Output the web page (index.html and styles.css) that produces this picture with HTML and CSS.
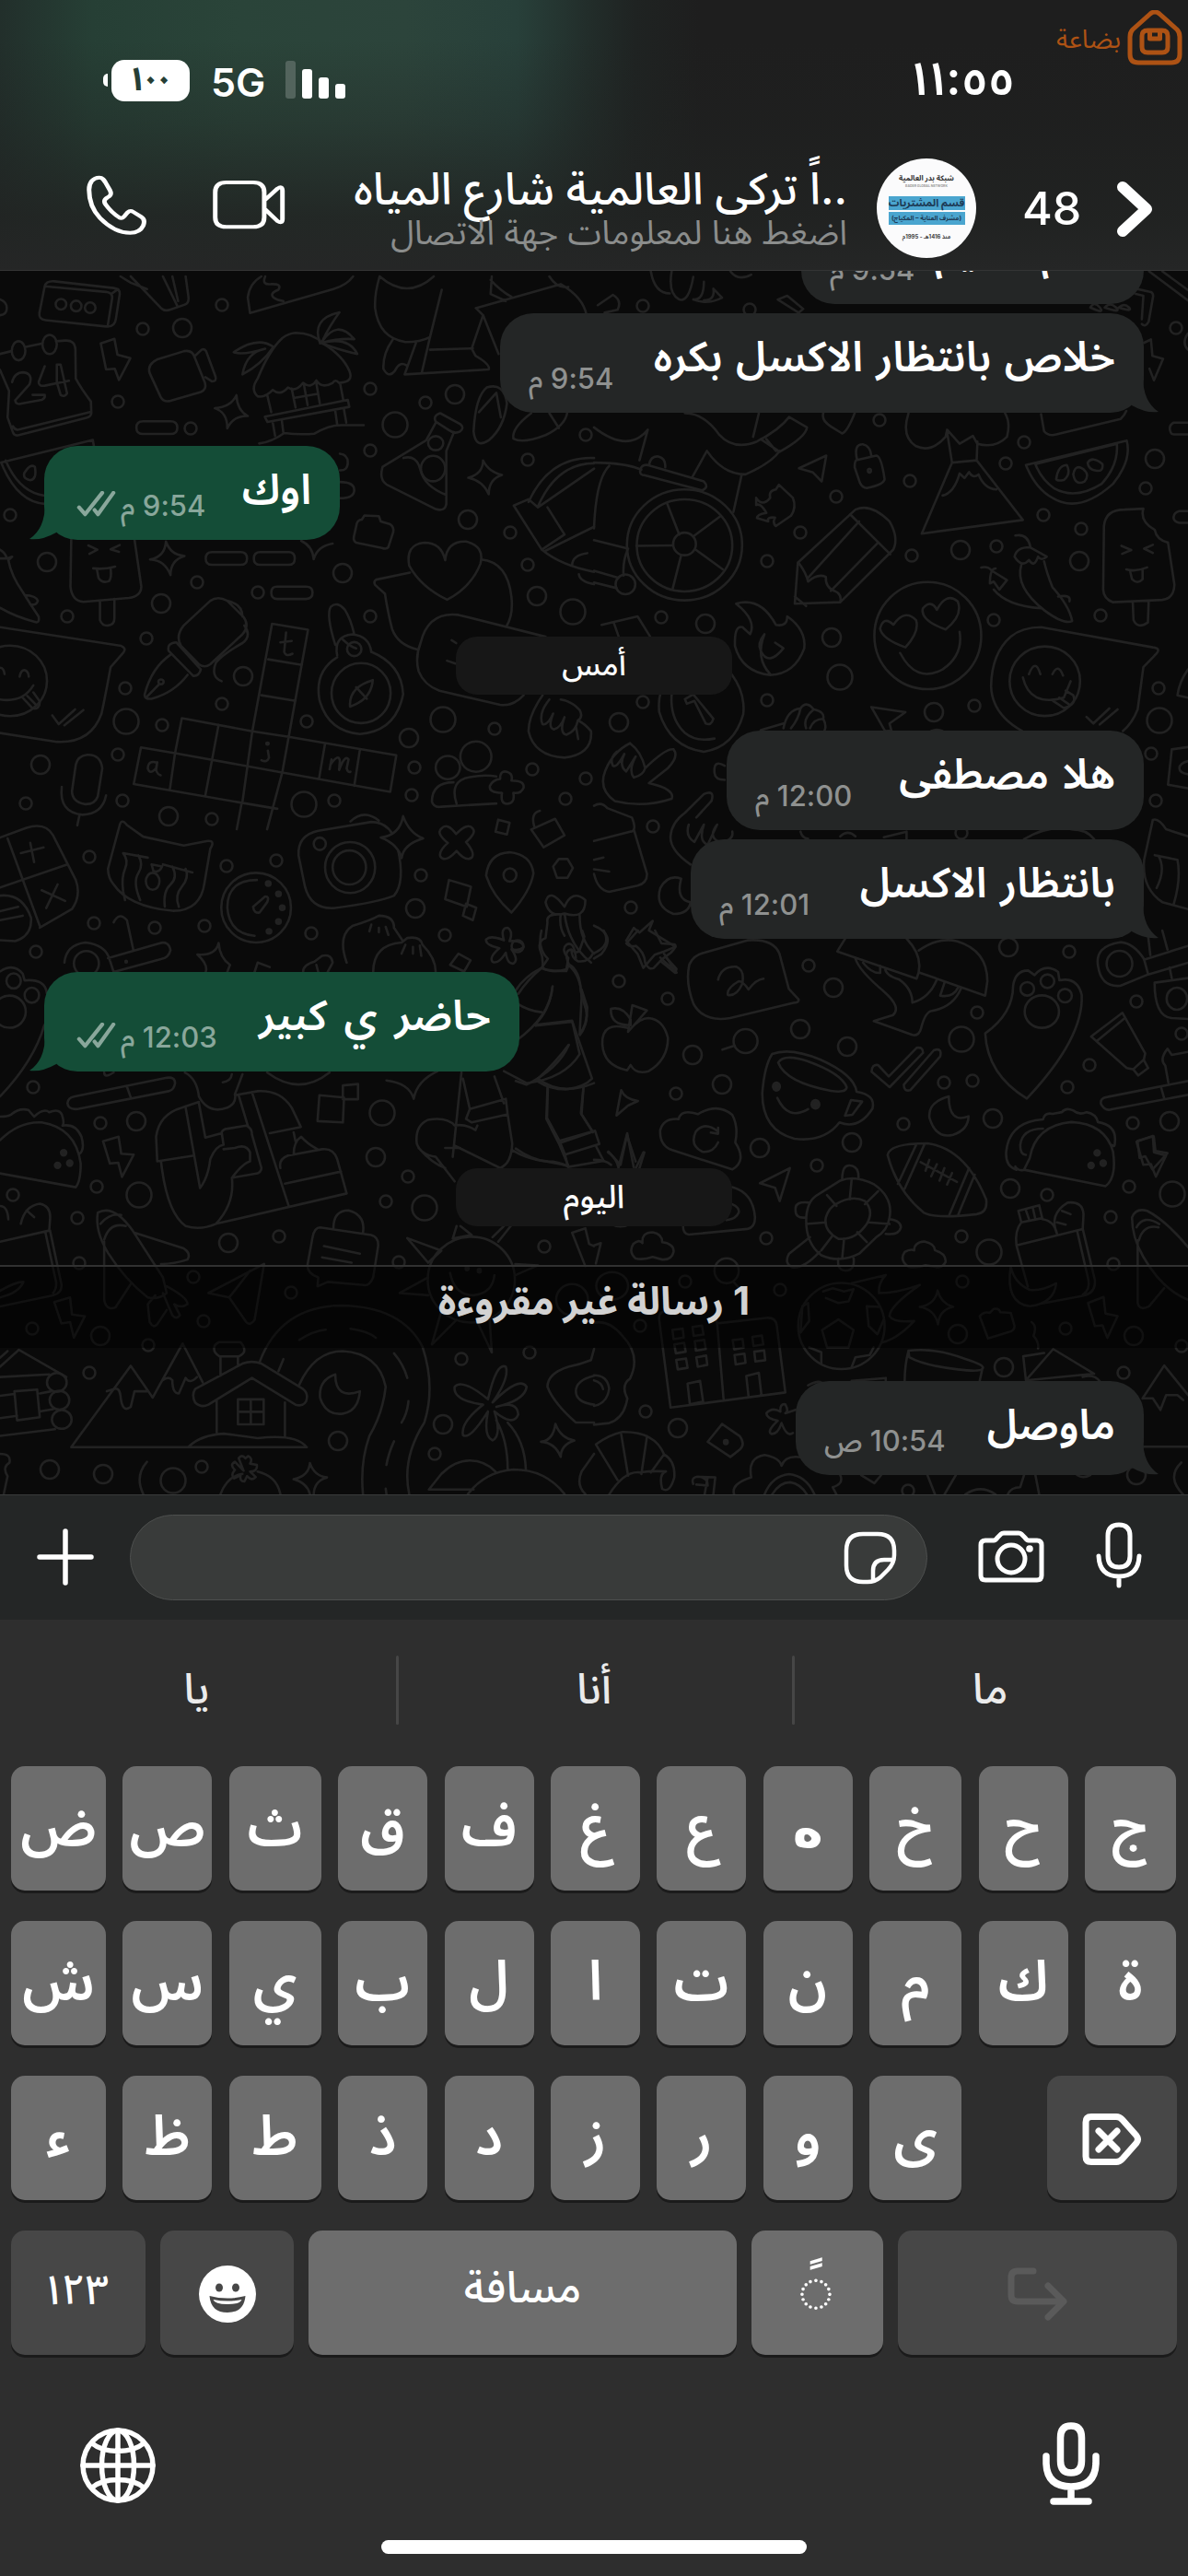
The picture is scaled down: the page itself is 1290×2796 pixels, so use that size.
FILE: index.html
```html
<!DOCTYPE html>
<html lang="ar">
<head>
<meta charset="utf-8">
<title>محادثة</title>
<link rel="stylesheet" href="styles.css">
</head>
<body>
<div class="screen">
  <header class="header">
    <div class="status">
      <div class="status-left">
        <span class="battery-nub"></span>
        <span class="battery"><b>١</b><b>٠</b><b>٠</b></span>
        <span class="network">5G</span>
        <span class="bars"><i class="dim"></i><i></i><i></i><i></i></span>
      </div>
      <time class="clock"><b class="slim">١</b><b class="slim">١</b><b>:</b><b>٥</b><b>٥</b></time>
    </div>
    <div class="contact">
      <svg class="ic phone" viewBox="226 570 162 198" preserveAspectRatio="none"><path d="M262 578C270 578 274 586 278 594L290 620C295 632 291 638 283 643C274 650 273 657 279 667C289 684 301 698 314 708C321 713 326 708 331 699C337 688 343 684 351 690L372 706C381 713 381 723 377 735C371 751 360 758 343 758C318 758 290 743 264 710C242 682 235 645 235 618C235 595 245 578 262 578Z"/></svg>
      <svg class="ic video" viewBox="560 588 194 162" preserveAspectRatio="none"><path d="M598 597H669Q698 597 698 629V711Q698 742 669 742H598Q569 742 569 711V629Q569 597 598 597ZM700 654L733 617Q746 606 746 624V716Q746 733 733 723L700 684"/></svg>
      <div class="who" dir="rtl">
        <h1>..اً تركى العالمية شارع المياه</h1>
        <p>اضغط هنا لمعلومات جهة الاتصال</p>
      </div>
      <div class="avatar" dir="rtl">
        <div class="brand">شبكة بدر العالمية</div>
        <div class="brand-sub" dir="ltr">BADER GLOBAL NETWORK</div>
        <div class="band">قسم المشتريات</div>
        <div class="band small">(مشرف العناية – المكياج)</div>
        <div class="since">منذ 1416هـ - 1995م</div>
      </div>
      <span class="count">48</span>
      <svg class="ic chevron" viewBox="0 0 38 60"><path d="M6 6L32 30L6 54"/></svg>
    </div>
    <div class="watermark" dir="rtl">
      <svg class="ic store" viewBox="0 0 60 60"><path d="M25 4Q30 0 35 4L54 21Q57 24 57 29V48Q57 57 48 57H12Q3 57 3 48V29Q3 24 6 21Z"/><path d="M22 22H38Q44 22 44 28V40Q44 46 38 46H22Q16 46 16 40V28Q16 22 22 22ZM24.500 22V31H35.500V22"/></svg>
      <span>بضاعة</span>
    </div>
  </header>

  <main class="chat">
    <svg class="doodles" viewBox="0 294 1290 1328">
      <defs>
        <marker id="s" markerUnits="userSpaceOnUse" markerWidth="40" markerHeight="40" refX="20" refY="20"><circle cx="20" cy="20" r="6.500"/></marker>
        <marker id="m" markerUnits="userSpaceOnUse" markerWidth="40" markerHeight="40" refX="20" refY="20"><circle cx="20" cy="20" r="10"/></marker>
        <marker id="l" markerUnits="userSpaceOnUse" markerWidth="40" markerHeight="40" refX="20" refY="20"><circle cx="20" cy="20" r="13.500"/></marker>
      </defs>
      <!-- bubbles scattered between the drawings -->
      <polyline class="dot-s" points="155,357 241,331 128,436 207,465 402,422 462,437 402,489 573,499 636,472 11,559 554,578 573,613 214,632 280,643 402,669 73,669 159,693 136,747 241,764 176,787 333,783 537,791 128,819 578,835 450,833 447,863 363,869 133,869 28,872 230,889 614,867 636,845 698,332 814,336 955,456 1112,480 1092,503 988,522 908,539 1133,559 1244,530 1277,356 869,578 833,609 990,603 1082,593 1174,574 718,670 1079,673 1195,668 698,762 833,760 1058,766 1258,747 709,897 685,985 878,1048 1250,818 1255,869 1044,904 672,1065 725,1084 1061,1099 1161,1033 1234,1087 1183,1156 1159,1180 1025,1175 1056,1173 734,1187 981,1220 1230,1219 887,1265 562,1027 1283,1122 97,930 246,940 300,934 102,1002 168,1007 222,1005 338,1013 457,950 483,1015 39,1033 36,1180 109,1219 105,1288 14,1297 84,1322 86,1371 443,1277 419,1304 303,1342 210,1386 316,1403 433,1370 591,1353 35,1442 221,1434 161,1460 97,1490 501,1475 575,1468 472,1578 219,1592 1226,1288 1137,1297 1206,1321 1044,1342 832,1344 1209,1372 847,1400 744,1391 695,1439 1045,1391 1157,1442 1283,1461 1220,1490 701,1532 986,1618"/>
      <polyline class="dot-m" points="198,356 494,428 508,564 51,610 372,622 175,655 583,647 264,734 444,801 44,830 183,886 766,677 1043,597 1172,609 1254,498 903,692 672,784 1014,773 1095,1028 905,1072 869,1117 752,1145 920,1136 784,1177 825,1246 925,1240 1078,1214 1270,1217 451,986 148,1217 408,1256 248,1349 109,1450 481,1546 367,1564 54,1595 112,1600 1097,1290 1040,1448 1231,1450 1090,1484 736,1550 1234,1601"/>
      <polyline class="dot-l" points="429,461 622,664 481,781 137,783 330,873 912,735 1259,782 415,1208 151,1297 461,1311 188,1607 1074,1359 1273,1296 1044,1128"/>

      <g transform="translate(0 300) scale(.4114 .3827)">
        <path d="M118 28Q122 12 144 14L300 33Q318 36 316 50L306 120Q303 145 280 142L120 124Q102 122 104 104ZM118 28L280 44Q298 47 296 62L284 142M296 48L312 36"/>
        <ellipse cx="161" cy="79" rx="14" ry="15"/><ellipse cx="201" cy="84" rx="14" ry="15"/><ellipse cx="238" cy="89" rx="14" ry="15"/>
        <path d="M0 65Q18 72 18 90T0 110M318 0L345 18L388 36M345 0L425 90Q435 100 450 94L488 80Q500 76 497 55L490 0M430 0L468 84M455 0L470 70"/>
        <path d="M654 60Q658 20 690 0M654 60L660 104L880 36Q915 25 932 0M700 0Q690 25 715 22Q745 20 735 38Q710 48 722 60Q732 68 748 70"/>
        <path d="M0 220L30 212M68 200L112 190M148 184L172 182Q198 180 199 208L200 290Q215 320 240 355L241 385Q242 397 228 401L50 450Q38 454 34 442L20 400L24 325L0 265M34 425Q40 438 52 434L240 384"/>
        <ellipse cx="49" cy="211" rx="18" ry="27"/><ellipse cx="131" cy="193" rx="19" ry="27"/>
        <path d="M32 300Q38 272 62 272Q88 276 78 306L40 352Q42 366 60 360L110 350Q120 346 118 336L86 336M118 255L102 300Q102 312 118 310L182 296M150 250V300L160 336Q170 344 177 332L160 250Z"/>
        <path d="M266 190L302 177L310 222L344 232L314 294L303 262L280 264Z"/>
        <path d="M414 236L486 212Q508 208 514 230L541 302Q546 320 530 328L450 353Q432 358 424 342L395 274Q388 250 414 236ZM516 224L532 208Q540 204 544 212L569 285Q572 298 560 298L542 286"/>
        <path d="M780 160Q825 160 852 190Q905 225 922 268Q935 300 895 302Q885 290 878 302Q850 320 835 295Q820 320 800 302Q780 330 760 315Q740 340 720 322Q700 345 680 340Q660 320 680 290Q710 210 745 175Q760 162 780 160ZM705 335L716 385M898 305L906 350M699 398L918 350L922 370L706 413ZM770 318L780 372M802 306L812 365M835 303L844 360M775 345L838 333M720 415L726 452M744 410L748 444M885 382L890 420M908 378L914 415M684 474Q720 468 750 444Q790 450 830 446Q870 420 905 422L960 422"/>
        <path d="M722 200Q680 168 617 215Q640 225 700 205Q650 215 640 278Q690 250 722 200ZM845 190Q820 120 896 102Q870 140 850 185Q890 120 935 178Q895 175 850 188Q920 170 943 220Q900 210 850 190"/>
        <path d="M1002 0Q988 50 990 90Q1000 175 1070 186Q1110 186 1135 172L1166 38M1036 180Q1010 220 1012 262Q1025 290 1042 268Q1055 240 1072 252M1098 188L1068 278L1290 264Q1295 250 1255 225L1245 205L1275 110L1316 220M1135 172L1114 270M1135 208L1248 204M1002 0Q1075 68 1145 0M1298 0L1295 50L1335 70M1256 90L1480 22Q1540 60 1548 110M1256 90L1275 110M1295 10Q1320 40 1350 58M1450 0Q1470 35 1500 30"/>
        <path d="M567 374Q610 370 624 337Q626 380 654 396Q615 395 600 431Q600 385 567 374ZM1236 571Q1275 560 1275 522Q1290 555 1325 563Q1290 575 1290 618Q1275 580 1236 571ZM396 803Q435 795 438 752Q450 790 487 793Q450 805 450 847Q435 805 396 803ZM795 750Q825 765 828 802Q838 765 878 758"/>
        <path d="M378 411H450Q468 411 468 429T450 447H378Q360 447 360 429T378 411ZM560 782H635Q652 782 652 800T635 818H560Q543 818 543 800T560 782ZM687 782H762Q778 782 778 800T762 818H687Q670 818 670 800T687 782ZM732 880H808Q825 880 825 897T808 915H732Q716 915 716 897T732 880ZM897 503Q918 505 918 528T897 550M897 583Q935 583 935 606T897 629"/>
        <path d="M3 528L245 464L248 482M3 528Q45 640 118 645M15 522Q50 612 118 622M64 558Q80 530 92 540Q98 575 80 578Q60 575 64 558Z"/>
        <path d="M1162 388L1216 420Q1226 430 1214 440Q1200 448 1185 436L1150 412Q1142 395 1162 388ZM1150 415L1125 465L1010 540Q1000 575 1020 590L1150 660Q1175 668 1178 645L1178 495L1198 442M1065 515Q1100 505 1110 550Q1120 595 1178 620"/><ellipse cx="1150" cy="473" rx="20" ry="20"/><ellipse cx="1143" cy="545" rx="32" ry="36"/>
        <path d="M1250 440Q1255 340 1285 315Q1330 300 1338 360Q1330 430 1290 465Q1255 490 1250 440ZM1264 385L1310 330L1322 400M1402 388Q1350 430 1355 460Q1380 475 1440 450Q1490 425 1497 388M1450 388L1475 430"/>
        <path d="M955 690L962 678L1000 680L1005 695L1030 703Q1040 710 1038 725L1025 768Q1020 775 1008 770L940 755Q932 750 934 738L942 700Q946 690 955 690Z"/>
        <path d="M188 746L186 880Q190 920 220 923L340 912Q372 908 373 880L355 746M264 920L264 975Q270 992 285 990Q302 988 302 970L302 915M233 763L257 775L236 787M316 762L292 774L314 781M246 828Q275 832 304 823M256 832L260 855Q270 872 288 864Q295 855 292 828"/>
        <path d="M0 775Q15 785 18 800L32 795L22 805Q30 850 60 895Q80 930 102 965Q105 985 92 980Q40 965 0 940M65 904Q95 905 100 920Q95 935 80 930M0 800L18 800"/>
        <path d="M1175 805Q1180 750 1230 752Q1280 765 1268 815Q1245 880 1180 917Q1110 880 1080 820Q1070 760 1120 755Q1165 755 1175 805ZM1082 840L993 860Q985 865 990 875L1016 900Q1025 960 1035 1000Q1050 1045 1102 1058M1270 803Q1340 810 1350 910Q1355 960 1337 992M1440 1022L1210 960Q1130 950 1110 1040Q1095 1080 1105 1120Q1120 1160 1160 1175L1320 1215Q1355 1220 1382 1188M1192 1032L1204 1040M1180 1090L1202 1098"/>
        <path d="M485 990L555 920Q575 905 600 920L642 965Q660 990 640 1015L555 1100Q540 1112 525 1100L478 1048Q462 1020 485 990ZM465 1038L530 1115Q525 1135 510 1133L445 1062Q440 1040 465 1038ZM450 1073Q400 1110 382 1185Q380 1200 400 1198Q460 1180 495 1130M385 1195L420 1157M600 920Q640 930 640 965M645 990Q665 1020 640 1040Q590 1070 570 1095Q555 1135 585 1148"/><ellipse cx="425" cy="1150" rx="7" ry="7"/>
        <path d="M718 985L813 1002L762 1306L1046 1358L1030 1462L745 1407L705 1568M718 985L666 1290L480 1253L462 1352L372 1336L353 1440L638 1493L625 1568M708 1086L797 1102M690 1188L780 1204M666 1290L762 1306M666 1290L640 1490M745 1407L762 1306M462 1352L745 1407M577 1272L542 1472M462 1352L448 1457M858 1325L842 1425M950 1342L935 1445M638 1493L732 1510"/>
        <path d="M755 1010L750 1065Q755 1080 772 1070M740 1038L770 1034M415 1380Q392 1370 390 1395Q395 1415 412 1395L415 1378L412 1400Q415 1412 424 1415M707 1345L710 1365Q705 1380 690 1372M875 1370L870 1398M872 1385Q895 1350 897 1375L895 1400Q910 1355 920 1370L915 1395Q918 1408 925 1405"/><ellipse cx="706" cy="1325" rx="3" ry="3"/>
        <path d="M885 1045Q860 960 873 937Q890 920 910 945Q925 970 935 1015M905 1030Q925 1050 940 1055M890 1075Q880 1020 930 1015Q975 1020 980 1065"/><ellipse cx="935" cy="1057" rx="19" ry="20"/><path d="M890 1080Q830 1120 843 1200Q865 1290 950 1298Q1045 1290 1064 1185Q1060 1100 980 1065"/><ellipse cx="953" cy="1182" rx="78" ry="85"/><path d="M984 1145Q980 1200 924 1220Q920 1165 984 1145ZM940 1165L968 1198"/>
        <path d="M0 995L320 1048Q335 1055 325 1068L292 1108Q280 1180 268 1240Q240 1325 150 1320L0 1295"/><ellipse cx="27" cy="1147" rx="97" ry="100"/><path d="M52 1135Q55 1115 66 1117Q75 1120 76 1135M0 1110Q10 1110 12 1128M0 1200Q60 1210 88 1160M60 1195L86 1225Q105 1230 105 1205L88 1180M72 1190L95 1215M138 1245L155 1270L198 1228M170 1273L220 1230"/>
        <path d="M230 1357Q265 1355 270 1395L258 1475Q250 1498 225 1497Q190 1490 190 1460L200 1385Q205 1360 230 1357ZM163 1448Q155 1520 218 1527Q270 1525 280 1472M210 1527L204 1557"/>
        <ellipse cx="1182" cy="1393" rx="32" ry="33"/><ellipse cx="1256" cy="1362" rx="41" ry="43"/><path d="M1197 1435Q1140 1435 1140 1490Q1145 1508 1165 1504L1310 1495M1205 1495Q1185 1430 1240 1420Q1280 1412 1310 1418M1320 1425Q1320 1400 1338 1405Q1355 1410 1350 1430Q1385 1430 1382 1450Q1375 1468 1355 1465Q1360 1495 1338 1496Q1320 1495 1325 1465Q1290 1465 1293 1445Q1300 1428 1320 1425Z"/>
        <path d="M1432 1188Q1395 1245 1395 1290Q1410 1360 1490 1365Q1565 1355 1560 1290Q1545 1270 1530 1262M1450 1200Q1420 1240 1432 1270Q1445 1275 1460 1240Q1445 1280 1462 1285Q1480 1280 1490 1250Q1475 1295 1495 1300Q1520 1290 1525 1260Q1540 1250 1530 1230Q1510 1205 1480 1200M1520 1275L1526 1312"/>
        <path d="M1568 515Q1450 510 1395 640M1568 530Q1470 530 1420 652M1356 650L1395 632L1420 655L1568 545M1356 650L1430 775L1490 732L1445 655M1430 775Q1480 820 1568 838M1440 778L1568 710M1510 820Q1510 790 1550 785M1528 845Q1530 865 1568 873"/>
      </g>

      <g transform="translate(645 270) scale(.4114 .5102)">
        <path d="M150 48Q160 95 200 95M205 48Q195 95 225 108Q250 115 262 60M262 108Q290 110 290 70M290 110Q320 110 315 85L338 104Q300 120 262 108M10 120L50 98Q75 110 62 130L28 136M360 48Q380 70 415 55M485 108L510 100L552 128L540 136Z"/>
        <path d="M1430 85L1470 92Q1478 96 1475 105L1464 155Q1455 168 1446 160M1430 96L1450 100L1446 150M1310 125Q1320 110 1335 125T1310 125M1348 125Q1362 112 1378 125T1348 125M1385 125Q1400 115 1412 125T1385 125M1465 48L1568 110M1500 48L1568 88M1452 200L1470 193L1474 228L1502 234L1478 280L1466 255M1568 180Q1550 200 1568 215"/>
        <path d="M605 350Q600 365 625 378L655 393Q668 390 688 350M0 380Q80 430 130 395L142 385L120 450M240 350Q290 350 330 395Q370 430 430 410Q490 385 515 358L562 380Q560 400 490 432L440 405M455 405L480 430M260 485L298 430Q340 480 400 480Q470 455 490 430M435 350L420 400M390 480L368 560M0 455Q80 455 125 470M0 595Q5 490 40 462M122 472Q125 455 150 462L290 495Q305 508 285 514L135 482Q120 482 122 472ZM145 460Q150 440 170 442Q190 446 188 465M0 620L90 638Q75 665 78 695M0 685L65 700M0 710L60 722"/>
        <ellipse cx="239" cy="630" rx="152" ry="118"/><ellipse cx="239" cy="631" rx="126" ry="98"/><ellipse cx="239" cy="628" rx="30" ry="24"/><ellipse cx="83" cy="714" rx="26" ry="21"/><path d="M225 608L193 542M262 612L332 570M268 640L340 682M230 652L208 722M209 631L112 632"/>
        <path d="M541 467L613 440L601 495L578 476ZM692 450L745 440Q758 440 767 490Q765 502 720 509Q708 508 702 498L688 465Q688 452 692 450ZM694 448Q685 415 710 416Q730 420 732 440"/><ellipse cx="727" cy="472" rx="4" ry="4"/>
        <path d="M428 530Q445 550 465 530Q460 515 480 512L488 502L525 530Q535 550 520 568L480 590Q470 582 478 572Q455 570 460 580L430 573Q430 565 455 562Q440 540 428 545Z"/>
        <path d="M530 755L538 668L690 555Q730 540 780 580Q805 615 790 640L650 752ZM540 668Q560 690 565 708Q590 690 612 698Q610 720 635 728Q655 735 650 752M676 565L782 650M700 580L565 700M750 625L625 728M530 740L560 760"/>
        <path d="M830 350Q810 400 850 420Q890 435 928 400L932 385L965 415L1000 398L1012 415Q1060 425 1090 400Q1100 370 1085 350M932 390L945 455L1010 450L1012 410M945 455L865 606L1132 577L1010 450M920 525Q950 520 965 478L978 488L990 475Q1000 490 1015 480Q1030 510 1062 512"/>
        <path d="M1140 460L1406 408Q1420 450 1370 500Q1280 565 1210 530Q1165 510 1140 460ZM1165 458L1380 415Q1385 460 1340 500Q1270 535 1215 510Q1180 490 1165 458ZM1220 490Q1225 460 1248 460Q1260 480 1240 492Q1222 495 1220 490ZM1265 480Q1270 458 1290 468Q1310 480 1295 495Q1270 505 1265 480ZM1303 455Q1315 440 1342 458Q1345 475 1325 472Q1305 470 1303 455ZM1180 352L1188 388Q1200 400 1220 395L1390 362Q1400 355 1405 345"/>
        <path d="M1346 590Q1350 555 1400 555L1450 553Q1440 580 1480 598Q1485 620 1515 625L1532 715Q1530 745 1500 747L1370 752Q1345 745 1344 725ZM1422 752L1424 790Q1435 810 1462 795L1464 750M1392 632L1418 641L1394 649M1475 630L1452 638L1475 647M1405 682Q1430 688 1460 678M1415 686L1420 703Q1435 715 1448 703L1448 682M1568 558H1545Q1532 560 1530 570T1545 583H1568M1568 370H1530Q1518 375 1520 385T1530 395H1568"/>
        <path d="M1110 655Q1115 635 1150 635L1195 655Q1180 665 1172 655Q1162 680 1148 662Q1130 680 1110 655ZM1152 635Q1145 605 1112 610M1128 672Q1110 720 1190 770Q1240 800 1262 792Q1255 760 1210 720Q1195 690 1188 665M1022 678Q1040 675 1050 685L1090 705L1070 725L1055 708L1045 712Q1045 680 1060 680M1055 725Q1090 760 1180 765M1225 740Q1260 735 1255 750"/>
        <path d="M375 755Q440 740 480 800Q510 805 510 782Q560 810 555 850Q530 905 465 907Q390 900 372 845Q370 800 392 805L412 820Q430 790 375 755ZM465 905Q425 870 450 820Q430 840 440 855Q460 890 500 850L478 838"/>
        <ellipse cx="881" cy="823" rx="141" ry="114"/><path d="M808 860Q850 925 920 895Q975 865 965 815M822 848Q760 830 755 808Q765 780 790 800Q820 765 850 790Q860 815 822 848ZM928 810Q860 790 868 765Q890 745 905 768Q930 730 960 750Q975 780 928 810Z"/>
        <path d="M1100 825Q1130 805 1180 805L1475 848Q1500 850 1480 865L1450 890L1435 980Q1420 1010 1396 1026M1100 825Q1050 860 1048 930Q1050 990 1130 1026"/><ellipse cx="1190" cy="920" rx="93" ry="74"/><path d="M1148 905Q1165 870 1178 905M1210 905Q1225 880 1238 908M1132 912Q1150 975 1240 955L1258 920M1212 962L1240 977Q1275 970 1265 950L1245 940M1228 955L1255 970M1300 996L1318 1010L1360 978M1335 1012L1382 980"/>
        <path d="M20 800L115 782L148 825M52 795L65 825M363 905Q400 945 394 990Q370 1060 290 1070Q200 1060 172 985Q170 960 175 948M205 948Q200 1000 240 1030Q270 1050 318 1042M240 958L262 948L315 1000Q310 1015 295 1010L265 962L245 968Z"/>
        <path d="M500 1010L440 1024M500 1020Q510 980 545 978Q560 960 580 980Q610 985 605 1000Q615 1015 608 1026M545 978Q540 1000 520 1020M580 980Q550 1000 560 1020M605 1000Q580 1000 570 1020M732 975L822 986L780 1010L785 1025L768 1026ZM890 1026Q905 1020 920 1026"/>
        <path d="M95 1052Q50 1070 30 1110Q10 1150 55 1175Q130 1190 205 1170Q215 1150 145 1137L195 1105Q225 1080 210 1065Q190 1062 135 1105M60 1070Q40 1085 50 1100Q60 1105 80 1075Q65 1100 85 1112L110 1080Q90 1110 105 1125Q130 1120 135 1105Q125 1070 95 1052M345 1100Q315 1085 318 1115Q320 1130 345 1130"/>
        <path d="M255 1310Q200 1280 202 1250Q205 1220 240 1200L290 1160Q320 1150 310 1175L270 1210M250 1225Q240 1250 265 1262L290 1225Q275 1260 300 1268L325 1225Q300 1250 330 1262Q370 1260 365 1240M230 1340Q195 1330 175 1360Q160 1400 210 1415Q250 1415 255 1390Q215 1385 230 1340Z"/>
        <path d="M0 1185Q20 1175 35 1190L100 1210Q115 1240 95 1240L0 1260M105 1235L140 1330Q140 1350 115 1355L40 1368Q10 1365 0 1330M0 1300L25 1295M0 1320L40 1325M85 1472L105 1445L120 1455L155 1430L145 1450L215 1485L185 1495L160 1502L130 1530L115 1500ZM185 1500L218 1540L175 1508M0 1440Q60 1460 20 1500L0 1510"/>
        <path d="M545 1240Q550 1255 565 1255M765 1252L825 1240V1256M650 1250Q670 1235 690 1250M1135 1256Q1200 1225 1260 1235Q1300 1235 1320 1256"/>
        <path d="M1452 1300L1475 1215Q1490 1210 1510 1235L1568 1250M1452 1300Q1445 1360 1500 1390L1568 1405M1480 1290L1540 1300M1490 1292Q1510 1320 1485 1360M1540 1300Q1550 1340 1530 1395M1568 1060L1525 1065L1515 1140L1568 1148M1568 1090Q1545 1095 1545 1105T1568 1118M1568 895Q1545 920 1540 950L1568 955"/>
      </g>

      <g transform="translate(560 1010) scale(.4656 .3333)">
        <path d="M60 0Q50 60 75 92L60 122Q70 132 118 132L124 110Q110 65 130 62Q145 80 150 60L160 20L155 0M205 0Q225 50 180 75Q170 105 145 100M130 62Q130 90 145 100M60 122Q20 150 0 195M124 110Q150 130 152 200L160 240Q175 290 150 340M86 182Q80 280 0 360M47 310L132 297L178 482Q160 510 120 517Q80 518 50 490M0 235Q30 262 60 266M124 372Q100 450 25 502L0 490M75 515L73 610L102 685L185 652L195 695L115 730L102 685M158 510L152 595L178 652M188 705L205 750L122 770L115 730M0 710Q40 750 75 752Q100 752 120 768"/>
        <path d="M258 42L285 0M258 42Q265 55 280 50Q300 70 302 105Q310 130 322 122L340 95L362 72Q378 50 370 45L340 42L325 0M340 102L372 138L375 125L352 90"/>
        <path d="M268 320Q200 290 202 370Q205 440 260 455L268 438Q280 470 310 458Q355 420 355 350Q345 290 310 285Q290 285 268 320ZM268 308Q220 310 222 255Q250 245 268 290ZM262 330L272 243L306 260Z"/>
        <path d="M440 72L540 32Q600 25 615 75L637 190L660 225Q660 235 650 235L500 285Q440 300 415 240Q395 170 405 110Q415 80 440 72ZM472 160Q480 115 515 118Q535 130 528 175Q515 215 495 210Q490 190 520 165Q530 165 543 192Q560 160 578 157"/>
        <path d="M235 602L246 520Q255 550 285 555L262 570ZM260 660L240 770M260 660L275 770M215 722Q235 740 240 774M298 722L280 774M482 388L510 375"/><ellipse cx="536" cy="360" rx="28" ry="39"/>
        <path d="M380 614Q385 580 425 598Q470 560 505 600Q520 640 512 690Q540 750 505 778L365 715Q335 700 337 650Q345 610 380 614ZM472 655Q440 620 420 655Q405 700 435 720Q460 725 472 690M455 658L472 662V642"/>
        <path d="M598 402Q640 380 710 420Q790 470 795 525Q840 535 832 580Q800 650 755 625Q720 690 650 678Q575 650 575 530Q580 440 598 402ZM612 430Q625 400 680 425Q760 465 772 510Q770 530 735 522Q630 495 612 430ZM782 552L808 557L785 600L768 603ZM610 545Q635 620 682 582"/>
        <ellipse class="fill" cx="608" cy="508" rx="8" ry="13"/><ellipse class="fill" cx="699" cy="566" rx="9" ry="14"/>
        <path d="M750 68L768 27M750 68L935 157Q955 90 912 27M940 65Q985 20 1030 35Q1100 65 1100 165L1095 212L942 137M792 90Q800 130 860 200Q900 250 880 275L835 295L925 340Q940 345 945 320Q955 265 970 262Q1020 250 1038 190M810 105Q830 140 850 138V115M862 122Q860 145 895 160Q925 190 925 235Q965 220 982 160M1000 170L990 212Q1020 220 1032 185"/>
        <path d="M830 460Q830 435 845 438L870 475L935 382Q950 378 950 398L872 510ZM905 502L975 390Q995 380 990 410L920 520Q905 525 905 502ZM1010 540Q960 560 965 610Q980 680 1020 665Q1055 650 1056 605Q1010 630 1010 540Z"/>
        <path d="M1095 335Q1160 270 1160 180Q1165 130 1195 130L1210 145Q1235 105 1265 135L1268 162Q1310 150 1320 210Q1325 350 1192 547Q1100 470 1095 335Z"/><ellipse cx="1193" cy="190" rx="16" ry="22"/><ellipse cx="1240" cy="165" rx="16" ry="22"/><ellipse cx="1281" cy="212" rx="16" ry="22"/><ellipse cx="1227" cy="264" rx="40" ry="53"/>
        <path d="M1415 268L1342 345L1425 448L1440 452L1465 420L1468 400ZM1355 360L1418 288M1440 452L1452 472L1475 448L1465 422M1465 92Q1440 40 1410 38Q1350 50 1358 115Q1365 185 1410 180L1475 143ZM1465 95L1568 50M1475 143L1568 105M1480 80L1475 20M1520 62L1508 0M1490 170Q1490 280 1530 285L1568 288M1490 170L1568 155M1530 155L1525 120"/><ellipse cx="1408" cy="108" rx="30" ry="42"/><ellipse cx="1542" cy="222" rx="24" ry="36"/>
        <path d="M1365 565Q1362 545 1380 542L1568 490M1365 565Q1375 590 1390 582L1568 535M1505 510L1512 545M1522 495L1515 440Q1500 420 1520 385L1530 405L1568 395M1450 685L1488 670L1492 718L1520 725L1485 778L1468 735L1455 740Z"/>
      </g>

      <g transform="translate(0 880) scale(.4114 .4847)">
        <path d="M0 60L70 38Q120 25 140 55L200 155Q215 190 190 220L105 262M0 172L178 120M20 62L105 258M55 95L115 82M80 72L90 115M110 178L172 202M152 165L122 218M0 190Q60 185 82 240Q85 280 40 292L0 290M0 225L48 215M0 245L60 235"/>
        <path d="M285 130L315 35Q320 15 335 32L378 58L485 78L545 68Q570 65 555 85L540 160Q530 225 455 224Q340 215 300 165Q285 150 285 130ZM325 95Q340 110 330 130T325 180L330 200M365 100Q380 120 365 140T370 200M325 95L390 105M430 120L508 138M455 125Q470 150 450 165T435 215M490 130Q500 150 480 170T472 215M400 120L428 125Q420 140 405 135Z"/><ellipse cx="403" cy="158" rx="18" ry="19"/>
        <ellipse cx="676" cy="217" rx="92" ry="78"/><path d="M678 155Q600 155 600 217Q605 275 672 280M668 215L700 192Q712 192 705 205L685 228Q670 230 668 215Z"/>
        <g class="fill"><ellipse cx="708" cy="163" rx="6" ry="5"/><ellipse cx="735" cy="186" rx="6" ry="5"/><ellipse cx="745" cy="217" rx="6" ry="5"/><ellipse cx="735" cy="248" rx="6" ry="5"/><ellipse cx="710" cy="270" rx="6" ry="5"/></g>
        <path d="M840 45L980 25Q1035 25 1050 85Q1070 160 1040 190Q1000 205 880 218Q820 220 805 170L788 100Q785 55 840 45ZM925 24Q960 -5 1000 22"/><ellipse cx="844" cy="74" rx="16" ry="14"/><ellipse cx="924" cy="127" rx="66" ry="57"/><ellipse cx="922" cy="127" rx="44" ry="38"/>
        <path class="solid" d="M1005 60Q1055 55 1064 12Q1080 50 1117 62Q1065 75 1060 106Q1050 75 1005 60Z"/>
        <path d="M1165 40Q1180 25 1204 52Q1235 25 1248 40Q1258 50 1230 70Q1255 95 1245 105Q1230 115 1205 90Q1175 118 1162 102Q1158 90 1182 72Q1150 50 1165 40ZM1315 20L1345 27L1338 53L1308 47ZM1402 42L1465 18L1490 55L1435 82ZM1410 35Q1400 5 1425 0M1460 125L1475 108H1498L1512 128L1498 150H1470ZM1185 155L1243 170L1232 215L1175 198ZM1230 208L1257 217L1248 245L1222 235Z"/>
        <path d="M1283 145Q1290 95 1345 93Q1402 98 1408 140Q1400 180 1350 228Q1300 190 1283 145Z"/><ellipse cx="1346" cy="144" rx="17" ry="15"/>
        <path d="M1330 290Q1320 262 1340 262Q1355 270 1345 292Q1380 290 1382 305Q1370 315 1350 310Q1370 335 1355 342Q1340 345 1335 318Q1315 345 1300 338Q1290 328 1318 308Q1280 300 1283 288Q1295 278 1330 290ZM1210 320L1242 335L1225 360L1188 345Z"/>
        <path d="M915 340Q890 280 930 258Q980 245 1000 235Q1040 235 1040 262L1062 290M985 361Q985 300 1060 295L1075 285Q1110 280 1115 300Q1150 330 1150 361M980 255L975 270M1000 262V272M1018 260L1025 278M1070 300L1060 320M1090 305V320M1108 302L1112 325"/>
        <path d="M1425 310Q1435 330 1432 352Q1460 365 1495 355L1500 330M1425 310Q1420 290 1440 285L1445 250Q1440 230 1480 232Q1475 260 1490 280M1490 230Q1450 240 1440 205Q1450 170 1490 215Q1510 175 1545 200Q1545 245 1490 230ZM1490 230Q1500 300 1560 340M1530 235Q1530 290 1568 320M1500 330Q1480 310 1495 300Q1515 290 1520 330M1432 350Q1390 380 1368 410M1500 345Q1535 370 1535 420L1530 500Q1550 480 1550 440L1535 400M1458 395Q1450 450 1410 480L1510 470L1530 545Q1490 600 1390 610L1330 583M1500 525Q1470 560 1420 600Q1480 640 1568 610"/>
        <path d="M170 340Q175 300 225 295Q280 300 290 335L300 361M300 250Q315 225 335 245L352 312M285 330L420 297Q445 290 450 312Q445 330 425 332L300 361"/><ellipse cx="228" cy="342" rx="33" ry="28"/><ellipse class="fill" cx="333" cy="338" rx="2" ry="2"/>
        <path d="M521 322Q570 325 577 296Q580 330 607 345L600 361M543 361Q550 345 521 322M672 361L680 340L712 350M800 361Q800 345 830 338L850 325Q875 320 878 340L865 361M835 345L840 361"/>
        <path d="M0 360Q35 340 60 365L65 380Q120 375 124 410M117 480Q90 560 0 640"/><ellipse cx="36" cy="381" rx="19" ry="17"/><ellipse cx="84" cy="413" rx="19" ry="17"/><ellipse cx="25" cy="450" rx="43" ry="36"/>
        <path d="M195 640L440 598Q462 595 462 610Q460 625 445 628L205 668Q180 670 178 655Q180 642 195 640ZM335 618L345 642M488 586Q520 600 525 640Q550 680 600 665Q625 655 620 635L640 590M705 586Q790 640 870 586M275 586Q275 600 300 586M588 608Q610 605 612 590"/>
        <path d="M415 785L412 730Q420 680 480 665L525 652M620 637L680 628Q740 625 770 665L794 708L712 722M665 630L762 885M415 785L512 772M425 785Q440 900 490 930Q530 940 570 925L915 857L890 780Q880 755 850 758L760 772Q735 780 740 800M525 655L542 732L585 722M490 665L528 845Q550 820 555 780Q570 750 590 748L585 720Q590 712 600 712L650 705Q665 710 665 725L690 800Q690 808 680 812L612 822Q640 790 660 785V765Q650 745 620 755L590 758M630 637L655 708M612 822Q620 880 570 925M752 835L900 808M775 770Q775 740 795 730Q810 745 838 758M775 720L780 740"/>
        <path d="M843 637L908 642L905 698L838 695ZM905 615L945 612V646L905 646Z"/><path d="M1020 604Q1080 610 1092 645Q1100 605 1155 583M1218 586L1195 775M1175 755H1215M1305 595L1330 655M1222 600L1240 668L1335 645L1340 680L1245 698L1230 690L1240 668M1260 705L1255 715Q1225 700 1200 705Q1180 685 1130 692Q1095 705 1100 745Q1110 770 1150 775L1200 830M1105 755Q1140 790 1175 800M1200 750L1320 800Q1350 790 1352 745L1340 680M1445 620L1442 690L1475 745L1560 720M1540 620L1535 680L1565 720M1475 745L1500 795M1352 760Q1390 780 1440 785L1500 795"/>
        <path d="M0 685Q20 685 30 680Q50 665 75 670L90 685Q115 665 130 675Q160 665 165 685Q170 700 165 705Q200 700 215 730Q225 760 208 770M0 738Q50 695 110 698Q200 710 213 790Q213 830 200 843L0 812"/><g class="fill"><ellipse cx="168" cy="766" rx="7" ry="6"/><ellipse cx="152" cy="794" rx="7" ry="6"/><ellipse cx="184" cy="789" rx="7" ry="6"/></g>
        <path d="M272 740L313 730L320 768L353 770L322 820L312 788L290 790ZM143 1100L185 1090L190 1128L224 1132L195 1180L185 1145L162 1148Z"/>
        <path d="M0 885Q20 885 22 915M55 925Q65 885 105 880Q135 885 132 915L130 940L0 965M70 895L90 910M132 940L162 1060Q165 1080 140 1085L0 1110M120 945L148 1055Q150 1070 140 1080M0 1090Q50 1080 62 1055Q40 1055 0 1075"/>
        <path d="M258 900Q300 880 350 940L430 1045L440 1080Q420 1095 390 1090Q330 1050 285 990Q250 940 258 900ZM265 925Q290 900 320 905M275 960Q290 920 332 930M355 945L485 980Q505 990 495 1005Q460 1015 425 1015M275 965V1095Q280 1120 305 1112L345 1060M410 1085L390 1105L395 1145Q405 1160 415 1150L440 1118M430 1080L455 1130Q465 1140 475 1130L460 1105Q480 1115 495 1105Q495 1090 440 1065"/>
        <path d="M845 933L980 950Q1000 955 998 975L985 1045Q975 1065 960 1062L865 1055L838 1065L840 1045Q808 1035 812 1015L825 955Q830 933 845 933ZM855 975L950 992M850 1000L928 1012M880 935Q880 895 920 895Q965 905 958 945M550 1080L697 1015L672 1140Q660 1155 650 1145L605 1090L550 1080M605 1090L660 1030"/>
        <ellipse cx="1244" cy="1050" rx="115" ry="96"/><path d="M1188 1035Q1200 1085 1250 1085Q1300 1080 1305 1040M1075 957L1165 985L1130 1012ZM1205 930L1195 958L1245 950M1215 930L1245 950M1315 965L1348 930M1300 955L1330 930M1360 1015L1420 1018L1360 1040M1130 1045L1055 1080L1130 1085M1165 1120L1140 1195L1205 1140M1260 1145L1298 1213L1292 1135M1510 945L1545 935L1555 970L1568 975M1510 945L1545 1020"/><ellipse class="fill" cx="1233" cy="1025" rx="4" ry="4"/><ellipse class="fill" cx="1265" cy="1030" rx="4" ry="4"/><ellipse cx="1510" cy="1095" rx="42" ry="35"/>
        <path d="M685 1235Q740 1110 900 1108Q1060 1110 1115 1200Q1150 1290 1120 1370Q1060 1450 1080 1530M790 1285Q830 1210 905 1210Q1000 1215 1018 1290Q1010 1350 975 1400Q950 1460 958 1530M790 1185Q825 1165 860 1162M925 1160Q970 1165 992 1180M1040 1215Q1065 1240 1075 1270M1078 1322Q1075 1350 1060 1370M1040 1412Q1025 1440 1020 1465M1018 1518L1020 1530M748 1228L735 1255"/>
        <path d="M188 1425L345 1243L403 1314L482 1193L535 1280M188 1425H810M282 1300L300 1295Q315 1290 318 1310Q322 1350 345 1335L355 1300L388 1300M430 1275Q445 1265 455 1275Q455 1305 472 1305L490 1270Q500 1285 520 1268M498 1424Q530 1398 590 1395Q640 1400 680 1405Q780 1395 808 1424M572 1320V1392M752 1325V1400M515 1295L640 1238Q665 1230 690 1238L800 1295Q815 1305 808 1322Q800 1335 780 1330L665 1270L550 1330Q530 1338 515 1325Q505 1308 515 1295ZM578 1190H635Q645 1200 645 1208T630 1222H580Q565 1215 565 1205T578 1190ZM582 1222V1265M628 1222V1240M628 1318H696V1374H628ZM662 1318V1374M628 1346H696"/>
        <path d="M885 1262Q840 1275 845 1315Q860 1355 905 1350Q945 1345 950 1300Q885 1320 885 1262Z"/>
        <path d="M0 1245L50 1207L175 1268M0 1268L130 1262M38 1300L98 1296L105 1358L45 1365ZM0 1310L38 1306M105 1305L135 1300M0 1360L45 1355M105 1345L140 1340M0 1400L145 1385M20 1210L0 1225"/><ellipse cx="150" cy="1280" rx="26" ry="21"/><ellipse cx="157" cy="1320" rx="26" ry="21"/><ellipse cx="163" cy="1363" rx="26" ry="21"/>
        <path d="M1288 1318Q1310 1235 1335 1245Q1345 1270 1300 1325Q1370 1265 1390 1290Q1385 1320 1310 1335Q1365 1320 1368 1352Q1355 1380 1305 1345Q1325 1400 1300 1410Q1275 1400 1288 1345Q1240 1410 1222 1398Q1215 1370 1275 1330Q1195 1320 1200 1290Q1220 1270 1288 1318ZM1310 1365Q1340 1410 1340 1475M1340 1370Q1385 1410 1388 1475M1132 1520L1165 1485Q1200 1455 1240 1455Q1280 1455 1308 1480M1132 1520H1250M1235 1530Q1280 1480 1355 1475Q1440 1475 1490 1530M1428 1413Q1460 1410 1466 1373Q1480 1405 1516 1410Q1480 1420 1480 1447Q1465 1415 1428 1413ZM775 1497Q815 1490 818 1461Q830 1490 863 1493Q830 1500 828 1530M775 1497Q810 1505 818 1530M582 1530Q600 1490 640 1485M740 1530Q730 1490 680 1480M388 1458Q355 1490 378 1530M0 1440Q30 1440 25 1460Q5 1470 20 1490L10 1530M1568 1205L1560 1230Q1530 1240 1500 1245Q1445 1260 1445 1290Q1460 1325 1520 1370L1568 1370M1568 1265Q1520 1275 1520 1300T1568 1330M1568 1440L1535 1480Q1520 1510 1545 1530"/>
        <path d="M643 1478L630 1450Q638 1440 648 1450L655 1445Q668 1450 660 1462L678 1465Q680 1480 660 1480L675 1492Q665 1502 652 1490L645 1502Q632 1502 635 1488L618 1495Q608 1488 620 1476Q605 1465 620 1458Z"/>
      </g>

      <g transform="translate(645 1200) scale(.4114 .3571)">
        <path d="M0 165Q30 165 45 180M70 180L87 90L110 170M38 140L70 180M133 142L120 190M365 248Q420 265 425 340Q425 370 405 375L250 392Q235 390 235 366M365 300Q385 310 382 325Q375 345 350 348M45 360Q70 375 95 360M0 425L18 418L5 480"/>
        <path d="M438 236L517 190L490 290L478 250Z"/>
        <path d="M104 420Q120 405 128 418Q125 385 155 385Q180 390 180 415Q212 420 210 445Q205 470 180 468L155 460Q130 470 110 465Q90 445 104 420ZM820 445Q835 435 845 440Q845 415 872 413Q900 420 900 440Q930 450 928 475Q920 495 900 490L875 485Q850 495 830 490Q805 470 820 445Z"/>
        <path d="M592 270L650 228Q690 210 740 240Q790 280 780 340Q775 380 745 400L700 450Q650 480 600 455Q560 420 560 350Q560 290 592 270ZM638 300Q680 270 715 290Q740 320 720 360Q690 410 645 405Q605 380 612 340Q620 310 638 300ZM655 225Q655 180 675 182Q700 185 698 220M568 295Q530 290 532 315Q530 345 560 340M780 345Q810 350 810 370Q805 395 770 390M570 400L515 450Q500 480 525 492Q555 495 595 445M645 465Q640 500 665 502Q690 500 685 462M615 272L640 305M680 225L675 285M750 260L715 300M725 355L780 360M695 385L720 415M660 405L655 465M600 440L630 395M560 360L612 355"/>
        <path d="M775 150Q780 115 880 115Q980 130 1035 285Q1040 325 1010 330Q900 345 870 325Q800 260 775 150ZM802 238L850 120M820 253L872 118M938 332L990 190M962 330L1005 210M862 172L958 232M875 198L885 165M890 215L905 178M912 228L925 190M932 240L945 205"/>
        <path d="M1088 140Q1095 60 1165 45L1185 42Q1190 20 1210 25L1235 20Q1245 5 1265 15Q1280 30 1300 20Q1325 25 1330 50Q1380 60 1375 110Q1375 130 1368 120M1115 195Q1085 185 1088 140M1135 195L1350 245Q1380 220 1370 140Q1350 55 1260 50Q1165 60 1150 160L1135 195Q1120 200 1112 185M1185 70Q1130 70 1125 120Q1125 150 1140 150"/>
        <g class="fill"><ellipse cx="1328" cy="144" rx="7" ry="8"/><ellipse cx="1312" cy="182" rx="7" ry="8"/><ellipse cx="1344" cy="175" rx="7" ry="8"/></g>
        <path d="M1432 110L1475 92L1478 142L1510 152L1483 216L1470 178L1450 180ZM1304 600L1345 582L1350 632L1382 640L1355 706L1342 668L1322 670Z"/>
        <path d="M1120 320L1175 303L1183 342L1128 355ZM1140 318L1148 345M1158 310L1165 345M1128 355Q1110 380 1115 425L1290 375M1183 345Q1215 350 1222 390M1222 390Q1200 330 1250 295Q1290 290 1292 330L1290 375L1322 530Q1325 570 1290 578L1180 602M1115 425L1145 550M1275 380L1305 530Q1310 560 1290 575M1235 320L1258 330M1222 355L1245 362M1100 490Q1085 600 1150 610Q1215 600 1220 540Q1180 565 1150 560Q1110 540 1100 490Z"/>
        <path d="M1420 340Q1430 310 1460 320Q1510 350 1568 430M1420 340Q1420 400 1450 460Q1500 560 1568 590M1432 370Q1450 330 1492 360M1438 410Q1450 360 1490 370M1435 410V600Q1440 625 1465 610L1505 555"/>
        <ellipse cx="350" cy="502" rx="32" ry="38"/><ellipse cx="48" cy="548" rx="42" ry="42"/><path d="M368 535L395 570M172 650Q170 620 200 625M172 650L202 918L505 872L482 665Q478 645 460 645L325 662L342 892M320 640L325 662M207 682L234 678L237 705L210 710ZM260 673L285 669L289 696L263 700ZM212 726L238 721L242 748L216 753ZM266 716L291 712L295 740L269 745ZM217 773L243 769L247 797L221 802ZM270 765L296 760L299 788L274 794ZM366 713L392 709L395 736L370 741ZM418 703L443 699L447 726L421 731ZM371 758L397 754L400 782L374 787ZM423 748L449 744L452 774L426 778ZM253 908L247 845L280 837L288 900ZM408 885L402 822L435 812L442 880"/>
        <ellipse cx="653" cy="670" rx="114" ry="131"/><path d="M645 650L685 682L672 735H615L602 682ZM605 565L630 555L660 565L685 558L672 595L645 600L612 585M565 600L550 610L545 690L568 655ZM752 612L720 610L725 670L748 695L765 650M568 735L600 750V785M738 735L728 758L690 765L680 795M680 540L770 515Q750 540 752 570Q800 570 860 545Q780 610 780 640Q790 660 845 655Q800 710 760 720"/>
        <path d="M860 612Q900 605 907 562Q915 600 948 612Q912 620 908 665Q900 620 860 612ZM1018 640Q1030 625 1045 630L1055 618Q1070 615 1072 628L1100 630L1110 670Q1110 685 1095 688L1040 708ZM1155 658Q1170 670 1160 700Q1175 720 1172 738M0 660Q40 650 75 700Q125 760 95 830Q70 850 88 890Q80 950 40 965L0 970M0 820Q35 820 40 860Q35 905 0 913M0 835Q20 840 24 862"/>
        <path d="M830 745Q820 790 820 837M830 745Q900 735 980 770Q1035 790 1025 800Q1020 810 960 802Q870 790 832 765ZM1025 800L1018 837M1133 762L1188 752M1133 762L1140 835L1212 740L1320 815L1140 835M1290 825Q1320 815 1335 838M565 850Q590 835 600 842M680 837L770 828V837M1448 890L1505 790L1568 880M1448 890L1475 890L1495 925L1510 880L1540 880L1555 895M1450 1037H1568"/>
        <path d="M300 1022L338 968L385 1005Q400 1030 385 1045L360 1068ZM492 930Q490 905 505 908Q515 930 505 935L532 925M492 930Q470 915 455 935Q455 950 485 958Q455 990 468 998Q485 1000 495 965Q510 1010 525 995M5 1030Q40 1000 75 992Q160 990 185 1060Q215 1080 212 1130Q200 1180 180 1165Q170 1120 190 1112Q150 1110 120 1115Q80 1110 40 1182M5 1030L62 1138M72 1000L90 1125M140 1005L125 1120M185 1060L150 1115M262 1150Q255 1130 275 1128L320 1130L315 1182M275 1128Q300 1130 300 1155L270 1152M300 1130L292 1182M370 1182Q360 1150 415 1130Q405 1070 450 1062Q490 1070 495 1095Q505 1060 550 1070M450 1182Q470 1125 515 1120Q560 1125 582 1182M470 1182Q490 1145 518 1145Q545 1150 562 1182M650 1123Q660 1150 630 1160L640 1182M705 1123L740 1148L758 1123M880 1123L900 1182M955 1123L925 1182M1092 1182Q1100 1160 1125 1160L1135 1123M1165 1123L1175 1182M980 1182Q1020 1150 1060 1182M1550 1085Q1510 1130 1555 1182M1275 1123Q1290 1135 1310 1123"/>
        <ellipse class="fill" cx="348" cy="1023" rx="5" ry="6"/>
      </g>
    </svg>

    <div class="thread" dir="rtl">
      <div class="bubble in m0"><span class="txt">تمام سليم</span><span class="at"><b>9:54</b> م</span></div>
      <div class="bubble in m1"><span class="txt">خلاص بانتظار الاكسل بكره</span><span class="at"><b>9:54</b> م</span><svg class="tail" viewBox="0 0 30 40"><path d="M0 0H12Q12 28 29 39Q16 41 0 32Z"/></svg></div>
      <div class="bubble out m2"><span class="txt">اوك</span><span class="at"><b>9:54</b> م</span><svg class="ic ticks" viewBox="0 0 44 30"><path d="M2 19L9 27L29 2M20 22L24 27L42 2"/></svg><svg class="tail" viewBox="0 0 30 40"><path d="M30 0H18Q18 28 1 39Q14 41 30 32Z"/></svg></div>
      <div class="day d1">أمس</div>
      <div class="bubble in m3"><span class="txt">هلا مصطفى</span><span class="at"><b>12:00</b> م</span></div>
      <div class="bubble in m4"><span class="txt">بانتظار الاكسل</span><span class="at"><b>12:01</b> م</span><svg class="tail" viewBox="0 0 30 40"><path d="M0 0H12Q12 28 29 39Q16 41 0 32Z"/></svg></div>
      <div class="bubble out m5"><span class="txt">حاضر ي كبير</span><span class="at"><b>12:03</b> م</span><svg class="ic ticks" viewBox="0 0 44 30"><path d="M2 19L9 27L29 2M20 22L24 27L42 2"/></svg><svg class="tail" viewBox="0 0 30 40"><path d="M30 0H18Q18 28 1 39Q14 41 30 32Z"/></svg></div>
      <div class="day d2">اليوم</div>
      <div class="unread">1 رسالة غير مقروءة</div>
      <div class="bubble in m6"><span class="txt">ماوصل</span><span class="at"><b>10:54</b> ص</span><svg class="tail" viewBox="0 0 30 40"><path d="M0 0H12Q12 28 29 39Q16 41 0 32Z"/></svg></div>
    </div>
  </main>

  <div class="composer">
    <svg class="ic plus" viewBox="0 0 62 62"><path d="M31 3V59M3 31H59"/></svg>
    <div class="field"><svg class="ic sticker" viewBox="0 0 58 58"><path d="M21 3H37Q55 3 55 21V26Q55 35 48 42L40 50Q34 55 26 55H21Q3 55 3 37V21Q3 3 21 3ZM53 31H44Q32 31 32 43V54"/></svg></div>
    <svg class="ic camera" viewBox="0 0 72 58"><path d="M8 11H17Q19 11 21 8L25 4Q26 3 28 3H44Q46 3 47 4L51 8Q53 11 55 11H64Q69 11 69 16V49Q69 54 64 54H8Q3 54 3 49V16Q3 11 8 11Z"/><circle cx="36" cy="31" r="15"/><circle class="dot" cx="56" cy="20" r="3.800"/></svg>
    <svg class="ic mic" viewBox="0 0 50 72"><path d="M25 3Q37 3 37 15V37Q37 49 25 49T13 37V15Q13 3 25 3ZM3 37Q4 59 25 59T47 37M25 59V69"/></svg>
  </div>

  <div class="keyboard">
    <div class="suggest"><span>يا</span><i></i><span>أنا</span><i></i><span>ما</span></div>
    <div class="row letters"><kbd>ض</kbd><kbd>ص</kbd><kbd>ث</kbd><kbd>ق</kbd><kbd>ف</kbd><kbd>غ</kbd><kbd>ع</kbd><kbd class="heh">ه</kbd><kbd>خ</kbd><kbd>ح</kbd><kbd>ج</kbd></div>
    <div class="row letters"><kbd>ش</kbd><kbd>س</kbd><kbd>ي</kbd><kbd>ب</kbd><kbd>ل</kbd><kbd>ا</kbd><kbd>ت</kbd><kbd>ن</kbd><kbd>م</kbd><kbd>ك</kbd><kbd>ة</kbd></div>
    <div class="row letters"><kbd>ء</kbd><kbd>ظ</kbd><kbd>ط</kbd><kbd>ذ</kbd><kbd>د</kbd><kbd>ز</kbd><kbd>ر</kbd><kbd>و</kbd><kbd>ى</kbd>
      <kbd class="dark back"><svg class="ic" viewBox="0 0 66 56"><path d="M10 3.500H37Q41 3.500 44 7L59 24Q62 28 59 32L44 49Q41 52.500 37 52.500H10Q4 52.500 4 46.500V9.500Q4 3.500 10 3.500ZM18 19L38 39M38 19L18 39"/></svg></kbd></div>
    <div class="row bottom">
      <kbd class="dark num"><b class="slim">١</b><b>٢</b><b>٣</b></kbd>
      <kbd class="dark emoji"><svg viewBox="0 0 62 62"><circle cx="31" cy="31" r="31" fill="#fff"/><g fill="#474747"><ellipse cx="22" cy="24" rx="4" ry="4.600"/><ellipse cx="40" cy="24" rx="4" ry="4.600"/><path d="M11.500 33Q31 38 50.500 33Q49 51 31 51T11.500 33Z"/></g><path d="M15.500 37Q31 40 46.500 37Q45 42 31 42T15.500 37Z" fill="#fff"/></svg></kbd>
      <kbd class="space">مسافة</kbd>
      <kbd class="tanwin">◌ً</kbd>
      <kbd class="dark enter"><svg class="ic" viewBox="0 0 66 58"><path d="M28 4H11Q4 4 4 11V30Q4 37 11 37H60M44 20L61 37L44 54"/></svg></kbd>
    </div>
    <div class="dock">
      <svg class="ic globe" viewBox="0 0 82 82"><circle cx="41" cy="41" r="38"/><ellipse cx="41" cy="41" rx="17.500" ry="38"/><path d="M41 3V79M3 41H79M13 17Q23 25.500 41 25.500T69 17M13 65Q23 56.500 41 56.500T69 65"/></svg>
      <svg class="ic mic2" viewBox="0 0 62 90"><path d="M31 4Q42.500 4 42.500 17V42Q42.500 55 31 55T19.500 42V17Q19.500 4 31 4ZM4 37V45Q5 70 31 70T58 45V37M31 70V86M12 86H50"/></svg>
    </div>
    <div class="home"></div>
  </div>
</div>
</body>
</html>
```
FILE: styles.css
```css
* { box-sizing: border-box; margin: 0; padding: 0; }
body {
  width: 1290px; height: 2796px; overflow: hidden; background: #0a0a0a; color: #fff;
  font-family: Inter, "Noto Sans Arabic", "DejaVu Sans", sans-serif; font-weight: 500;
}
.screen { display: flex; flex-direction: column; height: 2796px; }
svg { display: block; flex: none; }
.ic { fill: none; stroke: #fff; stroke-linecap: round; stroke-linejoin: round; }

/* header */
.header {
  position: relative; height: 294px; flex: none; border-bottom: 1px solid #343434; padding-top: 60px;
  background:
    linear-gradient(to bottom, rgba(32,34,33,0) 15%, rgba(32,34,33,.3) 45%, rgba(33,35,34,.85) 80%, #252626 100%),
    linear-gradient(to right, #222f2b 0, #263f35 100px, #2a4439 260px, #2c443b 440px, #28403a 560px, #222d2a 640px, #1f2322 690px, #1e1e1e 760px);
}
.status { display: flex; justify-content: space-between; align-items: flex-start; padding: 0 188px 0 112px; height: 100px; }
.status-left { display: flex; align-items: center; height: 54px; }
.battery-nub { width: 5px; height: 14px; background: #fff; border-radius: 5px 0 0 5px; margin-right: 4px; }
.battery { width: 85px; height: 45px; border-radius: 14px; background: #fff; color: #263e35; display: flex; justify-content: center; align-items: center; font-size: 36px; line-height: 41px; padding-bottom: 4px; }
.battery b { font-weight: 700; margin: 0 -3px; }
.network { font-size: 43px; font-weight: 600; margin: 3px 22px 0 23px; line-height: 44px; }
.bars { display: flex; align-items: flex-end; gap: 7px; height: 41px; margin-top: -1px; }
.bars i { width: 11px; background: #fff; border-radius: 3px; height: 32px; }
.bars i.dim { height: 41px; background: #53645d; }
.bars i:nth-child(3) { height: 23px; }
.bars i:nth-child(4) { height: 16px; }
.clock { display: flex; font-size: 51px; line-height: 50px; }
.clock b { font-weight: 600; }
.clock .slim { margin: 0 -5px; }
.contact { display: flex; align-items: flex-start; padding: 12px 39px 0 93px; }
.phone { width: 67px; height: 66px; margin-top: 18px; stroke-width: 12; }
.video { width: 80px; height: 54px; margin: 23px 0 0 70px; stroke-width: 12; }
.who { width: 610px; height: 110px; text-align: right; white-space: nowrap; }
.who h1 { font-size: 48px; font-weight: 530; line-height: 66px; height: 57px; }
.who p { font-size: 37px; font-weight: 400; color: #8b8d8c; line-height: 46px; }
.avatar { width: 108px; height: 108px; margin-left: 32px; border-radius: 50%; background: #fbfbfc; overflow: hidden; text-align: center; color: #1d3a55; font: 700 9px/13px Inter, "Noto Sans Arabic", sans-serif; padding-top: 16px; white-space: nowrap; }
.brand { color: #333; font-size: 8px; line-height: 10px; height: 12px; }
.brand-sub { font-size: 3.500px; line-height: 4px; height: 13px; color: #999; }
.band { width: 83px; height: 15px; margin: 0 auto 2px; background: #4aa5cf; font-size: 11.500px; line-height: 14px; }
.band.small { font-size: 7px; height: 14px; line-height: 13px; }
.since { font-size: 6px; margin-top: 6px; color: #444; }
.count { font-size: 50px; font-weight: 500; line-height: 60px; margin: 24px 0 0 50px; width: 64px; }
.chevron { width: 38px; height: 60px; margin: 25px 0 0 39px; stroke-width: 12; }
.watermark { position: absolute; right: 6px; top: 8px; display: flex; align-items: center; gap: 7px; color: #ad5214; font-size: 28px; font-weight: 400; line-height: 64px; }
.watermark span { padding-top: 2px; }
.store { width: 60px; height: 60px; stroke: #ad5214; stroke-width: 5; }

/* conversation */
.chat { position: relative; height: 1328px; flex: none; overflow: hidden; }
.doodles { position: absolute; inset: 0; width: 1290px; height: 1328px; fill: none; stroke: #222; stroke-width: 2.600; stroke-linejoin: round; stroke-linecap: round; }
.doodles path, .doodles ellipse { vector-effect: non-scaling-stroke; }
.doodles .fill, .doodles .fill ellipse { fill: #222; }
.doodles .solid { fill: #0a0a0a; }
.doodles polyline { stroke: none; }
.doodles marker circle { stroke: #222; stroke-width: 2.600; fill: none; }
.dot-s { marker: url(#s); }
.dot-m { marker: url(#m); }
.dot-l { marker: url(#l); }
.thread { position: relative; display: flex; flex-direction: column; align-items: flex-start; }
.bubble { position: relative; display: flex; justify-content: space-between; height: 108px; padding: 0 31px; border-radius: 36px; white-space: nowrap; margin-right: 48px; }
.in { background: #242626; }
.out { background: #144d37; align-self: flex-end; margin: 0 0 0 48px; padding-left: 35px; }
.txt { font-size: 45.500px; font-weight: 570; line-height: 94px; height: 94px; word-spacing: 3px; }
.m5 .txt { word-spacing: 7px; }
.at { font-size: 31px; font-weight: 500; color: #8f9190; align-self: flex-end; line-height: 50px; height: 50px; margin-bottom: 12px; }
.at b { font-weight: 500; letter-spacing: 2.600px; }
.out .at { color: #89a79b; margin-right: auto; }
.ticks { width: 43px; height: 28px; align-self: flex-end; margin: 0 5px 25px 0; stroke: #89a79b; stroke-width: 4.500; }
.tail { position: absolute; bottom: 0; width: 30px; height: 40px; }
.in .tail { right: -17px; fill: #242626; }
.out .tail { left: -17px; fill: #144d37; }
.m0 { width: 372px; margin-top: -72px; }
.m1 { width: 699px; margin-top: 10px; }
.m2 { width: 321px; height: 102px; margin-top: 36px; }
.m3 { width: 453px; margin-top: 39px; }
.m4 { width: 492px; margin-top: 10px; }
.m5 { width: 516px; margin-top: 36px; }
.m6 { width: 378px; height: 102px; margin-top: 36px; }
.day { align-self: center; width: 300px; height: 63px; border-radius: 23px; background: #171717; text-align: center; font-size: 33px; line-height: 60px; margin-top: 105px; }
.d2 { font-size: 35px; }
.unread { width: 1290px; height: 90px; margin-top: 42px; border-top: 2px solid #313131; background: rgba(0,0,0,.5); color: #d2d2d2; text-align: center; font-size: 42px; font-weight: 700; line-height: 73px; }

/* message input */
.composer { height: 136px; flex: none; background: #242626; border-top: 1px solid #393b3b; display: flex; align-items: flex-start; padding: 21px 50px 0 40px; }
.plus { width: 62px; height: 62px; margin-top: 15px; stroke-width: 5.500; }
.field { width: 867px; height: 93px; margin-left: 39px; border: 1px solid #4d4f4e; border-radius: 47px; background: #393b3a; display: flex; justify-content: flex-end; align-items: center; padding-right: 32px; }
.sticker { width: 58px; height: 58px; stroke-width: 4.500; }
.camera { width: 72px; height: 58px; margin: 17px 0 0 55px; stroke-width: 5; }
.camera .dot { fill: #fff; stroke: none; }
.mic { width: 50px; height: 72px; margin: 8px 0 0 56px; stroke-width: 5; }

/* keyboard */
.keyboard { flex: 1; background: #2e2e2e; }
.suggest { height: 159px; display: grid; grid-template-columns: 430px 3px 427px 3px 427px; align-items: center; text-align: center; font-size: 46px; padding-bottom: 6px; color: #ebebeb; }
.suggest span { padding-right: 3px; }
.suggest i { width: 3px; height: 75px; background: #464646; border-radius: 2px; }
.row { display: flex; justify-content: space-between; padding: 0 12px; height: 135px; margin-bottom: 33px; }
kbd { font: inherit; font-weight: 600; height: 135px; width: 97px; border-radius: 15px; background: #6d6d6d; box-shadow: 0 3px 0 #1b1b1b; display: flex; justify-content: center; align-items: center; }
.letters { justify-content: flex-start; gap: 18.400px; }
.letters kbd { font-size: 60px; font-weight: 640; line-height: 120px; padding-bottom: 7px; }
.letters .heh { font-family: "DejaVu Sans", sans-serif; font-size: 56px; padding-bottom: 0; }
.letters kbd:first-child { width: 103px; }
.letters kbd:nth-child(3), .letters kbd:nth-child(9) { width: 100px; }
.letters kbd:nth-child(11) { width: 99px; }
kbd.dark { background: #474747; }
.letters .back { width: 141px; margin-left: auto; padding: 2px 0 0; }
.back .ic { width: 66px; height: 56px; stroke-width: 7; }
.num { width: 146px; font-size: 45px; padding: 0 3px 4px 0; }
.num b { font-weight: 550; }
.num .slim { margin: 0 -4px; }
.emoji { width: 145px; }
.emoji svg { width: 62px; height: 62px; margin-top: 3px; }
.space { width: 465px; font-size: 47px; font-weight: 550; padding-bottom: 10px; }
.tanwin { width: 143px; font-size: 56px; padding: 0 3px 0 0; }
.enter { width: 303px; }
.enter .ic { width: 66px; height: 58px; stroke: #5a5a5a; stroke-width: 7; margin-top: 2px; }
.dock { display: flex; justify-content: space-between; align-items: flex-start; padding: 40px 96px 0 87px; height: 168px; }
.globe { width: 82px; height: 82px; stroke-width: 5.500; margin-top: 6px; }
.mic2 { width: 62px; height: 90px; stroke-width: 7.500; }
.home { width: 462px; height: 15px; border-radius: 8px; background: #fff; margin: 0 auto; }
```
